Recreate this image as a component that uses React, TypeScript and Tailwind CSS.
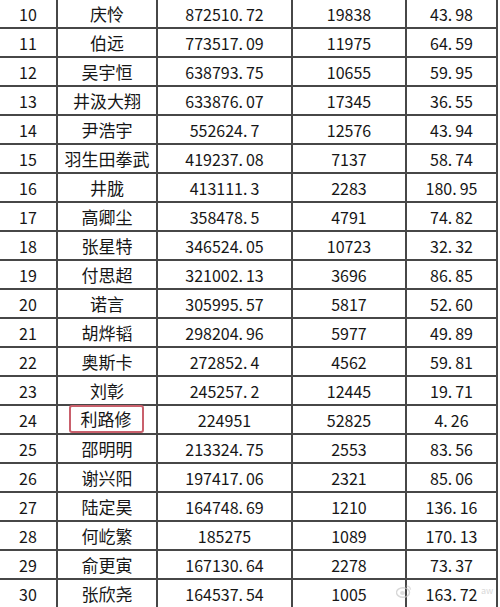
import React from "react";

type Row = [number, string, string, string, string];

const ROWS: Row[] = [
  [10, "庆怜", "872510.72", "19838", "43.98"],
  [11, "伯远", "773517.09", "11975", "64.59"],
  [12, "吴宇恒", "638793.75", "10655", "59.95"],
  [13, "井汲大翔", "633876.07", "17345", "36.55"],
  [14, "尹浩宇", "552624.7", "12576", "43.94"],
  [15, "羽生田拳武", "419237.08", "7137", "58.74"],
  [16, "井胧", "413111.3", "2283", "180.95"],
  [17, "高卿尘", "358478.5", "4791", "74.82"],
  [18, "张星特", "346524.05", "10723", "32.32"],
  [19, "付思超", "321002.13", "3696", "86.85"],
  [20, "诺言", "305995.57", "5817", "52.60"],
  [21, "胡烨韬", "298204.96", "5977", "49.89"],
  [22, "奥斯卡", "272852.4", "4562", "59.81"],
  [23, "刘彰", "245257.2", "12445", "19.71"],
  [24, "利路修", "224951", "52825", "4.26"],
  [25, "邵明明", "213324.75", "2553", "83.56"],
  [26, "谢兴阳", "197417.06", "2321", "85.06"],
  [27, "陆定昊", "164748.69", "1210", "136.16"],
  [28, "何屹繁", "185275", "1089", "170.13"],
  [29, "俞更寅", "167130.64", "2278", "73.37"],
  [30, "张欣尧", "164537.54", "1005", "163.72"],
];

const FONT = { fontFamily: '"Noto Sans CJK SC", "Noto Sans", sans-serif' };

// the source font draws the decimal point wide, so leave a small gap after it
function Num({ value }: { value: string }) {
  const [int, dec] = value.split(".");
  return (
    <span>
      {int}
      {dec !== undefined && (
        <>
          <span className="mr-[3px]">.</span>
          {dec}
        </>
      )}
    </span>
  );
}

const cell = "flex items-center justify-center border-r-2 border-[#474747] h-full";

export default function App() {
  return (
    <div className="relative w-[500px] h-[607px] overflow-hidden bg-white text-[#161616]" style={FONT}>
      <div className="w-[498px]">
        {ROWS.map(([rank, name, amount, count, ratio]) => (
          <div
            key={rank}
            className="grid grid-cols-[58px_100px_135px_114px_91px] h-[29px] border-b-2 border-[#474747]"
          >
            <div className={`${cell} text-[16px]`}>{rank}</div>
            <div className={`${cell} text-[17px]`}>
              {rank === 24 ? (
                <span className="inline-flex items-center justify-center w-[75px] h-[28px] border-2 border-[#c9606c] rounded-[3px] mt-[-1px] ml-[-2px]">
                  {name}
                </span>
              ) : (
                name
              )}
            </div>
            <div className={`${cell} text-[16px]`}>
              <Num value={amount} />
            </div>
            <div className={`${cell} text-[16px]`}>{count}</div>
            <div className={`${cell} text-[16px]`}>
              <Num value={ratio} />
            </div>
          </div>
        ))}
      </div>

      {/* faint weibo watermark */}
      <svg
        className="absolute left-[396px] top-[584px] opacity-70 pointer-events-none"
        width="16"
        height="14"
        viewBox="0 0 16 14"
      >
        <ellipse cx="7" cy="8.5" rx="6.5" ry="4.8" fill="none" stroke="#c8c8c8" strokeWidth="1.4" />
        <ellipse cx="6.5" cy="9" rx="2.4" ry="1.9" fill="#d0d0d0" />
        <path d="M10.5 2.2 A3.5 3.5 0 0 1 14.5 5.8" fill="none" stroke="#d4d4d4" strokeWidth="1.3" />
      </svg>
      <span className="absolute left-[481px] top-[586px] text-[9px] leading-none text-[#dadada] pointer-events-none">
        aw
      </span>
    </div>
  );
}
